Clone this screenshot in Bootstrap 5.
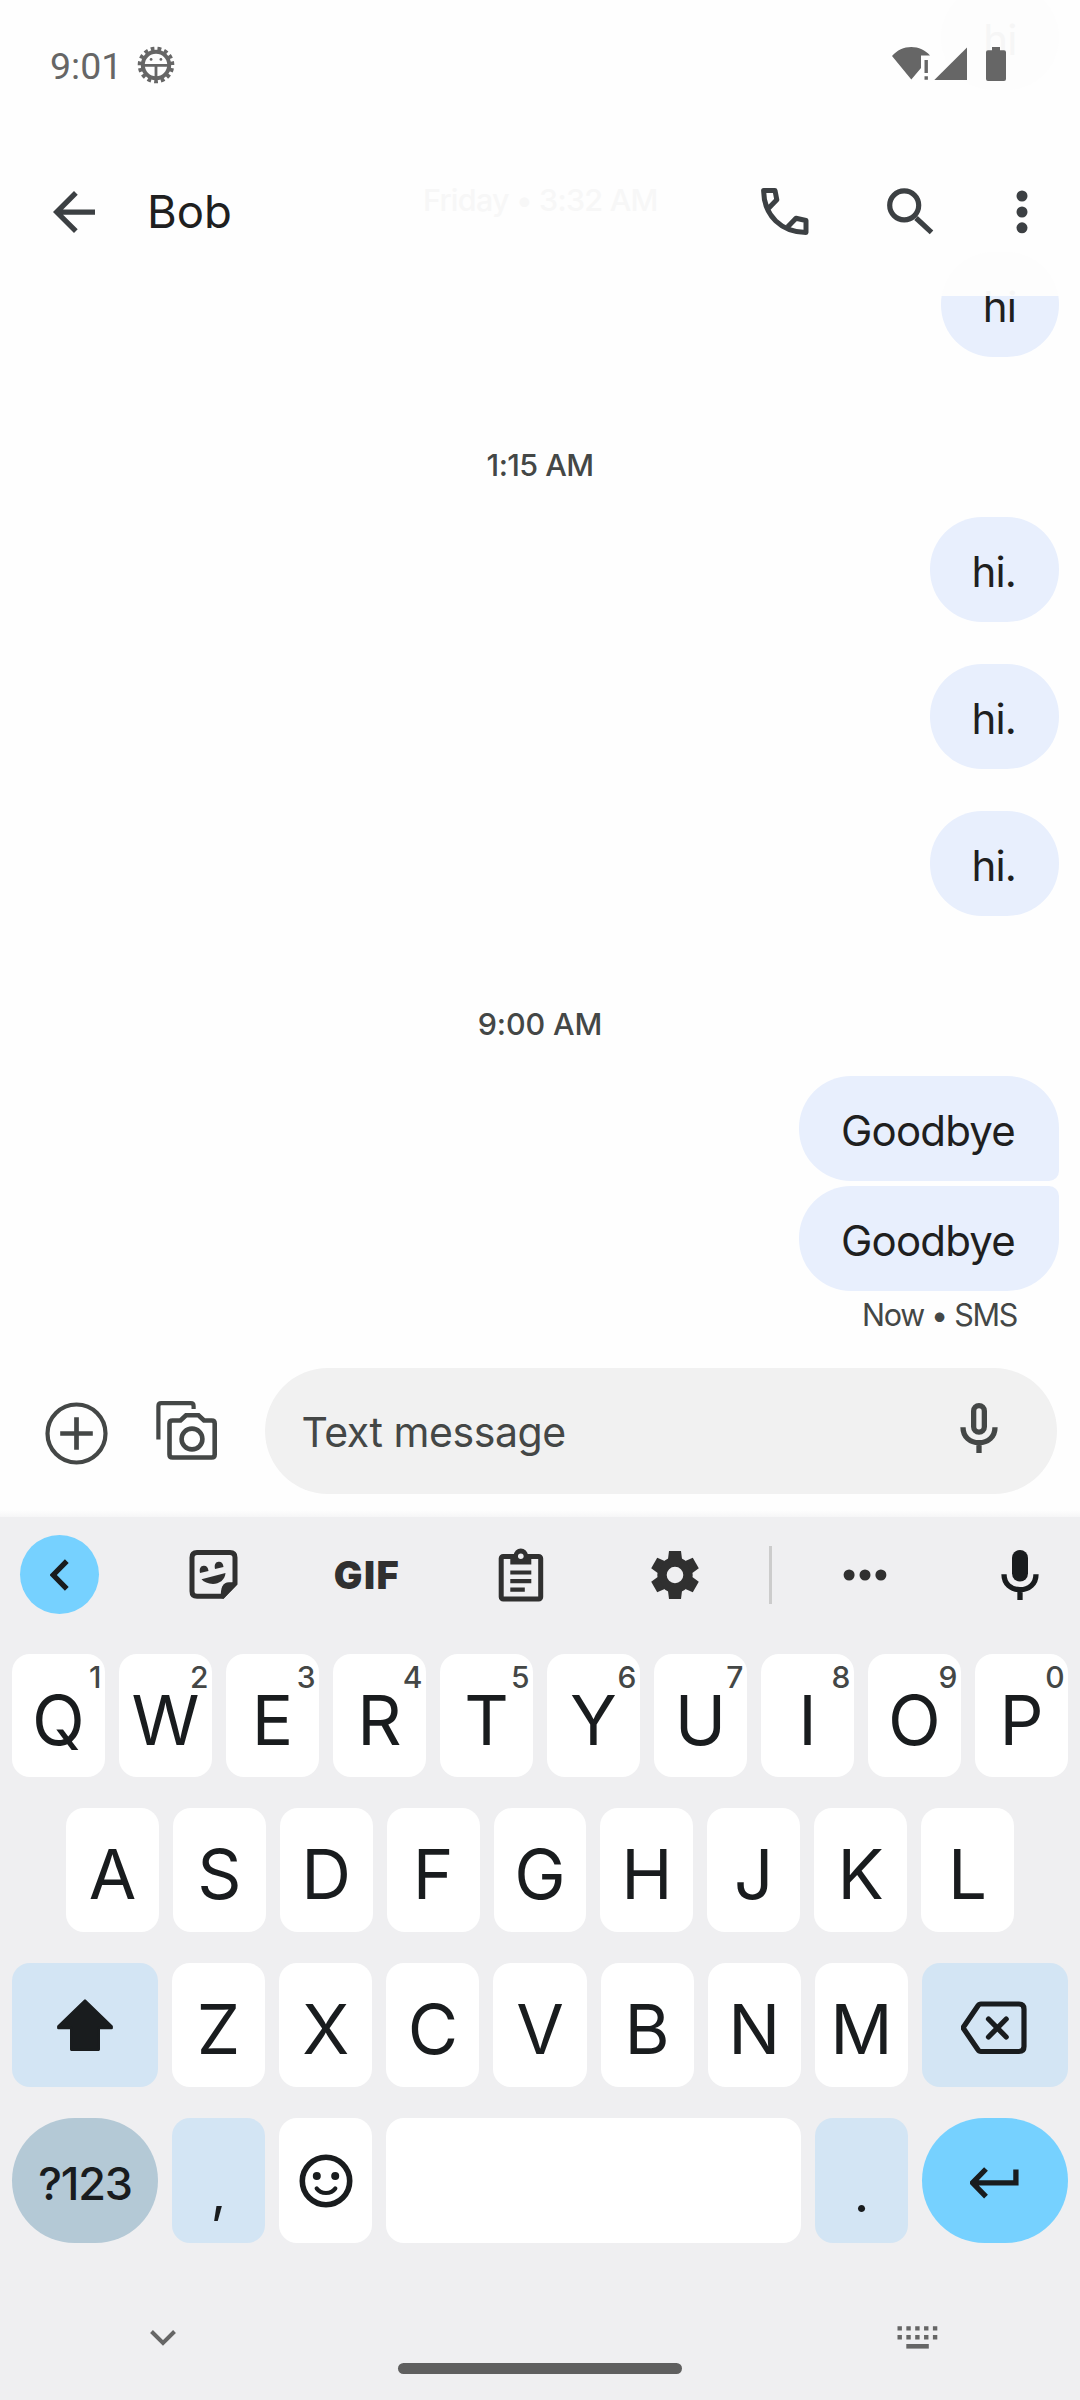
<!doctype html>
<html lang="en">
<head>
<meta charset="utf-8">
<meta name="viewport" content="width=device-width, initial-scale=1">
<title>Bob</title>
<link href="https://cdn.jsdelivr.net/npm/bootstrap@5.3.0/dist/css/bootstrap.min.css" rel="stylesheet">
<style>
  body { width: 1080px; height: 2400px; font-family: Inter, Roboto, sans-serif; color: #1f1f1f; background: #fefefe; }
  svg { display: block; flex: none; }
  .line-icon { fill: none; stroke: currentColor; }

  /* top area */
  .top-area { height: 296px; }
  .status-strip { height: 128px; padding: 0 74px 0 50px; color: #666; }
  .clock-text { font: 400 37.5px/44px Roboto, sans-serif; padding-top: 3px; width: 87px; }
  .app-strip { height: 168px; padding: 0 52px 0 52.5px; color: #3c4043; }
  .contact-name { font-size: 45.5px; line-height: 60px; margin-left: 52.5px; color: #1f1f1f; }
  .faded-bubble { right: 21px; width: 118px; height: 105px; border-radius: 52px; padding-top: 4px; background: #fdfdfd; color: #f6f6f6; font-size: 42px; line-height: 1; letter-spacing: -.8px; }
  .faded-first { top: -15px; }
  .faded-second { top: 252px; }
  .faded-date { top: 179px; left: 423px; font-weight: 500; font-size: 30.5px; line-height: 42px; letter-spacing: -.75px; color: #f7f7f7; }

  /* thread */
  .thread-area { height: 1042px; padding-right: 21px; }
  .msg { height: 105px; border-radius: 52px; background: #e8effd; padding: 4px 1px 0 0; font-size: 42px; letter-spacing: -.8px; line-height: 1; }
  .msg-hi { width: 118px; }
  .msg-dot { width: 129.5px; }
  .msg-bye { width: 260px; padding-right: 2px; }
  .msg-cut { margin-top: -44px; }
  .gap-msg { margin-bottom: 42px; }
  .join-bottom { border-bottom-right-radius: 10px; margin-bottom: 5px; }
  .join-top { border-top-right-radius: 10px; }
  .stamp { width: 1059px; padding: 87px 0 31px 21px; font-weight: 500; font-size: 30.5px; line-height: 42px; color: #444746; letter-spacing: -.1px; }
  .stamp-tight { letter-spacing: -.6px; }
  .receipt { font-size: 30.5px; line-height: 47px; letter-spacing: -1.3px; color: #444746; padding-right: 42px; }

  /* compose */
  .compose-row { height: 179px; padding: 30px 23px 23px 44.500px; color: #444746; background: linear-gradient(#fefefe 172px, #f6f6f7); }
  .compose-field { height: 126px; border-radius: 63px; background: #f1f1f1; margin-left: 47px; padding: 0 59px 0 36.5px; font-size: 41px; letter-spacing: -.45px; }

  /* keyboard */
  .keyboard-area { height: 883px; background: #efeff1; color: #191c1e; }
  .tool-row { height: 115px; margin-bottom: 22px; padding-left: 20px; color: #303030; }
  .tool-back { width: 79px; height: 79px; background: #76d1ff; color: #191c1e; margin-right: 37px; }
  .tool-cell { width: 154px; }
  .tool-more { width: 185px; }
  .tool-mic { width: 123px; padding-left: 2px; color: #191c1e; }
  .tool-line { width: 3px; height: 58px; background: #ccc; margin-left: 17px; }
  .gif-text { font-weight: 900; font-size: 38px; letter-spacing: 1.6px; line-height: 1; }
  .key-row { gap: 14px; padding: 0 12px; height: 124px; margin-bottom: 31px; }
  .key-row-first { height: 123px; }
  .key-row-mid { padding: 0 66px; }
  .key-row-low { height: 125px; margin-bottom: 0; }
  .keycap { flex: 1 1 0; min-width: 0; border-radius: 18px; background: #fff; font-size: 69px; line-height: 1; padding-top: 8px; }
  .key-row-first .keycap { padding-top: 9px; }
  .key-wide { flex: 0 0 146px; padding-top: 0; background: #d3e5f4; }
  .key-tone { flex: 0 0 93px; background: #d3e5f4; }
  .key-face { flex: 0 0 93px; padding-top: 0; }
  .key-round { border-radius: 63px; }
  .key-num { background: #b4c9d6; font-size: 45px; font-weight: 500; letter-spacing: -1.2px; padding-top: 5px; }
  .key-enter { background: #76d1ff; }
  .key-punct { font-size: 54px; padding-top: 24px; }
  .key-hint { top: 7.500px; right: 3.500px; font-size: 30px; line-height: 30px; font-weight: 500; color: #444746; }
  .nav-strip { margin-top: 83px; height: 24px; padding: 0 142px 0 150px; color: #666; }
  .home-pill { width: 284px; height: 11px; margin: 13px auto 0; border-radius: 5.5px; background: #5f5f5f; }
</style>
<script src="https://cdn.jsdelivr.net/npm/bootstrap@5.3.0/dist/js/bootstrap.bundle.min.js"></script>
</head>
<body class="d-flex flex-column overflow-hidden m-0">

<header class="top-area position-relative overflow-hidden flex-shrink-0">
  <div class="faded-bubble faded-first position-absolute d-flex align-items-center justify-content-center">hi</div>
  <div class="faded-date position-absolute text-nowrap">Friday • 3:32 AM</div>
  <div class="faded-bubble faded-second position-absolute d-flex align-items-center justify-content-center">hi</div>

  <div class="status-strip d-flex align-items-center position-relative">
    <span class="clock-text">9:01</span>
    <svg style="margin-top:2px" width="38" height="38" viewBox="-19 -19 38 38">
      <circle r="13.200" class="line-icon" stroke-width="4"/>
      <circle r="16.300" class="line-icon" stroke-width="4" pathLength="30" stroke-dasharray="1.100 .900" transform="rotate(83.400)"/>
      <path d="M-12 .3H12M0 0V13" class="line-icon" stroke-width="2.800"/>
      <circle cx="-4.900" cy="-5.600" r="1.400" fill="currentColor"/><circle cx="4.900" cy="-5.600" r="1.400" fill="currentColor"/>
    </svg>
    <svg class="ms-auto" width="114" height="36" viewBox="892 46 114 36" fill="currentColor">
      <path d="M892 56C897 50.200 904 47 911.300 47S925.500 50.200 930 55.500H921V68L911.300 79.500Z"/>
      <path d="M924.500 60h3.400v13h-3.400zM924.500 76.300h3.400v3.500h-3.400z"/>
      <path d="M967 47.500V80H934.300Z"/>
      <path d="M992 47h8v3.300h4q2 0 2 2V79q0 2-2 2h-16q-2 0-2-2V52.300q0-2 2-2h4z"/>
    </svg>
  </div>

  <div class="app-strip d-flex align-items-center position-relative">
    <svg width="42" height="42" viewBox="4 4 16 16" fill="currentColor"><path d="M20 11H7.830l5.590-5.590L12 4l-8 8 8 8 1.410-1.410L7.830 13H20z"/></svg>
    <span class="contact-name">Bob</span>
    <svg class="ms-auto" width="48" height="48" viewBox="761 187 48 48">
      <g class="line-icon" stroke-width="5" stroke-linejoin="round"><path d="M768.800 207L776.800 198.700 775 189.600H763.600C764 215 781.500 231.300 806 231.500V219.500L796 217.300 787.800 225.800"/></g>
    </svg>
    <svg style="margin-left:78.500px" width="47" height="48" viewBox="887.500 186.500 47 48">
      <g class="line-icon" stroke-width="5.200"><circle cx="904.700" cy="203.800" r="14.500"/><path d="M916.500 216.500L932 230.800"/></g>
    </svg>
    <svg style="margin-left:82px" width="12" height="44" viewBox="-6 -22 12 44" fill="currentColor"><circle cy="-16" r="5.500"/><circle r="5.500"/><circle cy="15.800" r="5.500"/></svg>
  </div>
</header>

<main class="thread-area d-flex flex-column align-items-end overflow-hidden flex-shrink-0">
  <div class="msg msg-hi msg-cut d-flex align-items-center justify-content-center flex-shrink-0">hi</div>
  <div class="stamp stamp-tight text-center">1:15 AM</div>
  <div class="msg msg-dot gap-msg d-flex align-items-center justify-content-center">hi.</div>
  <div class="msg msg-dot gap-msg d-flex align-items-center justify-content-center">hi.</div>
  <div class="msg msg-dot d-flex align-items-center justify-content-center">hi.</div>
  <div class="stamp text-center">9:00 AM</div>
  <div class="msg msg-bye join-bottom d-flex align-items-center justify-content-center">Goodbye</div>
  <div class="msg msg-bye join-top d-flex align-items-center justify-content-center">Goodbye</div>
  <div class="receipt">Now • SMS</div>
</main>

<section class="compose-row d-flex align-items-center flex-shrink-0">
  <svg style="margin-top:4px" width="63" height="63" viewBox="44.500 1401.500 63 63"><g class="line-icon" stroke-width="4.200"><circle cx="76" cy="1433" r="29"/><path d="M59.700 1433H92.300M76 1416.700V1449.300" stroke-width="4.700"/></g></svg>
  <svg style="margin:2px 0 0 48.500px" width="62" height="62" viewBox="156 1402 62 62">
    <g class="line-icon" stroke-width="4.600">
      <path d="M158.400 1440.500V1407q0-2.800 2.800-2.800H190.800q2.800 0 2.800 2.800V1410" stroke-width="4.200"/>
      <path d="M169.500 1424.500q0-3 3-3H180.500L186 1416.300H198.500L204 1421.500H211.700q3 0 3 3V1455.500q0 3-3 3H172.500q-3 0-3-3Z"/>
      <circle cx="192" cy="1440" r="10.400"/>
    </g>
  </svg>
  <div class="compose-field d-flex align-items-center justify-content-between flex-grow-1">
    <span class="pt-1">Text message</span>
    <svg style="margin-top:-6px" width="38" height="50" viewBox="0 0 38 50"><g class="line-icon" stroke-width="5.300"><rect x="13.650" y="2.650" width="10.700" height="26.500" rx="5.350"/><path d="M3 24.300C3 34 10 39.700 19 39.700S35 34 35 24.300M19 40V50"/></g></svg>
  </div>
</section>

<section class="keyboard-area flex-shrink-0">
  <div class="tool-row d-flex align-items-center">
    <div class="tool-back rounded-circle d-flex align-items-center justify-content-center flex-shrink-0">
      <svg width="20" height="32" viewBox="49.500 1558.500 20 32"><path class="line-icon" stroke-width="5.300" d="M66.300 1560.700L52.700 1574.500 66.300 1588.300"/></svg>
    </div>
    <div class="tool-cell d-flex justify-content-center">
      <svg width="49" height="49" viewBox="189 1550 49 49">
        <path class="line-icon" stroke-width="5" d="M197 1552.500H230q5 0 5 5V1583.500L222.500 1596.300H197q-5 0-5-5V1557.500q0-5 5-5z"/>
        <g fill="currentColor"><path d="M221 1598C220 1588 223 1582.300 229 1582.300H237V1584.500L223.500 1598.700z"/>
        <path d="M200 1573C199 1568 201 1566 203.500 1565.700S208.300 1567 208.500 1571zM215 1569C214 1564 216 1562 218.500 1561.700S223.300 1563 223.500 1567zM201.500 1579.300L225.500 1573C225 1580 219 1584 213 1584 208 1584 204 1582 201.500 1579.300z"/></g>
      </svg>
    </div>
    <div class="tool-cell text-center gif-text">GIF</div>
    <div class="tool-cell d-flex justify-content-center">
      <svg width="46" height="54" viewBox="498.700 1547.500 46 54">
        <rect class="line-icon" stroke-width="5" x="501.900" y="1556" width="39.500" height="42.500" rx="2"/>
        <path fill="currentColor" d="M511 1564V1555H514.500A7 7 0 0 1 528.500 1555H532V1564z"/>
        <circle cx="521.500" cy="1555.700" r="2.800" fill="#efeff1"/>
        <path class="line-icon" stroke-width="4.200" d="M511 1572H532M511 1580.700H532M511 1589.200H525.500"/>
      </svg>
    </div>
    <div class="tool-cell d-flex justify-content-center">
      <svg width="50" height="50" viewBox="-25 -25 50 50" fill="currentColor">
        <circle r="13" class="line-icon" stroke-width="9.400"/>
        <path id="tooth" d="M-7-16L-6-24H6L7-16z"/>
        <use href="#tooth" transform="rotate(60)"/><use href="#tooth" transform="rotate(120)"/><use href="#tooth" transform="rotate(180)"/><use href="#tooth" transform="rotate(240)"/><use href="#tooth" transform="rotate(300)"/>
      </svg>
    </div>
    <div class="tool-line"></div>
    <div class="tool-more d-flex justify-content-center"><svg width="44" height="12" viewBox="-22 -6 44 12" fill="currentColor"><circle cx="-15.900" r="5.500"/><circle r="5.500"/><circle cx="15.900" r="5.500"/></svg></div>
    <div class="tool-mic d-flex justify-content-center"><svg width="38" height="50" viewBox="0 0 38 50"><rect x="11" y="0" width="16" height="31.500" rx="8" fill="currentColor"/><path class="line-icon" stroke-width="5.300" d="M3 24.300C3 34 10 39.700 19 39.700S35 34 35 24.300M19 40V50"/></svg></div>
  </div>

  <div class="key-row key-row-first d-flex">
    <div class="keycap position-relative d-flex align-items-center justify-content-center">Q<span class="key-hint position-absolute">1</span></div>
    <div class="keycap position-relative d-flex align-items-center justify-content-center">W<span class="key-hint position-absolute">2</span></div>
    <div class="keycap position-relative d-flex align-items-center justify-content-center">E<span class="key-hint position-absolute">3</span></div>
    <div class="keycap position-relative d-flex align-items-center justify-content-center">R<span class="key-hint position-absolute">4</span></div>
    <div class="keycap position-relative d-flex align-items-center justify-content-center">T<span class="key-hint position-absolute">5</span></div>
    <div class="keycap position-relative d-flex align-items-center justify-content-center">Y<span class="key-hint position-absolute">6</span></div>
    <div class="keycap position-relative d-flex align-items-center justify-content-center">U<span class="key-hint position-absolute">7</span></div>
    <div class="keycap position-relative d-flex align-items-center justify-content-center">I<span class="key-hint position-absolute">8</span></div>
    <div class="keycap position-relative d-flex align-items-center justify-content-center">O<span class="key-hint position-absolute">9</span></div>
    <div class="keycap position-relative d-flex align-items-center justify-content-center">P<span class="key-hint position-absolute">0</span></div>
  </div>
  <div class="key-row key-row-mid d-flex">
    <div class="keycap d-flex align-items-center justify-content-center">A</div>
    <div class="keycap d-flex align-items-center justify-content-center">S</div>
    <div class="keycap d-flex align-items-center justify-content-center">D</div>
    <div class="keycap d-flex align-items-center justify-content-center">F</div>
    <div class="keycap d-flex align-items-center justify-content-center">G</div>
    <div class="keycap d-flex align-items-center justify-content-center">H</div>
    <div class="keycap d-flex align-items-center justify-content-center">J</div>
    <div class="keycap d-flex align-items-center justify-content-center">K</div>
    <div class="keycap d-flex align-items-center justify-content-center">L</div>
  </div>
  <div class="key-row d-flex">
    <div class="keycap key-wide d-flex align-items-center justify-content-center">
      <svg width="58" height="54" viewBox="56 1998 58 54"><path fill="currentColor" stroke="currentColor" stroke-width="2.600" stroke-linejoin="round" d="M85 2000.600L111.600 2026.500V2028H98.700V2049.600H71.300V2028H58.400V2026.500Z"/></svg>
    </div>
    <div class="keycap d-flex align-items-center justify-content-center">Z</div>
    <div class="keycap d-flex align-items-center justify-content-center">X</div>
    <div class="keycap d-flex align-items-center justify-content-center">C</div>
    <div class="keycap d-flex align-items-center justify-content-center">V</div>
    <div class="keycap d-flex align-items-center justify-content-center">B</div>
    <div class="keycap d-flex align-items-center justify-content-center">N</div>
    <div class="keycap d-flex align-items-center justify-content-center">M</div>
    <div class="keycap key-wide d-flex align-items-center justify-content-center">
      <svg style="margin-top:5px" width="68" height="54" viewBox="961 2001 68 54"><g class="line-icon" stroke-width="5.200" stroke-linejoin="round"><path d="M981 2004H1019q5 0 5 5V2046.500q0 5-5 5H981q-2 0-3.200-2L963 2027.800 977.800 2006q1.200-2 3.200-2z"/><path stroke-linecap="round" d="M988.500 2019L1006.200 2037M1006.200 2019L988.500 2037"/></g></svg>
    </div>
  </div>
  <div class="key-row key-row-low d-flex">
    <div class="keycap key-wide key-round key-num d-flex align-items-center justify-content-center">?123</div>
    <div class="keycap key-tone key-punct d-flex align-items-center justify-content-center">,</div>
    <div class="keycap key-face d-flex align-items-center justify-content-center">
      <svg width="54" height="54" viewBox="-27 -27 54 54"><circle class="line-icon" r="23.700" stroke-width="5.600"/><circle cx="-9.200" cy="-5" r="4" fill="currentColor"/><circle cx="9.200" cy="-5" r="4" fill="currentColor"/><path class="line-icon" stroke-width="4.200" stroke-linecap="round" d="M-9.300 7.500C-5 13.500 5 13.500 9.300 7.500"/></svg>
    </div>
    <div class="keycap"></div>
    <div class="keycap key-tone key-punct d-flex align-items-center justify-content-center">.</div>
    <div class="keycap key-wide key-round key-enter d-flex align-items-center justify-content-center">
      <svg style="margin-top:5px" width="50" height="32" viewBox="969.500 2167.500 50 32"><path class="line-icon" stroke-width="5.300" d="M1015.400 2170V2183.300H973M985.500 2169.500L972 2183.300 985.500 2197.200"/></svg>
    </div>
  </div>

  <div class="nav-strip d-flex align-items-center justify-content-between">
    <svg width="26" height="16" viewBox="0 0 26 16"><path class="line-icon" stroke-width="4" d="M1.500 1.500L13 13 24.500 1.500"/></svg>
    <svg style="margin-top:-2px" width="41" height="23" viewBox="0 0 41 23"><path class="line-icon" stroke-width="4.400" stroke-dasharray="4.400 4.450" d="M.5 2.400H41M.5 11.300H41"/><path fill="currentColor" d="M9.300 18H31.800V22.600H9.300z"/></svg>
  </div>
  <div class="home-pill"></div>
</section>
</body>
</html>
